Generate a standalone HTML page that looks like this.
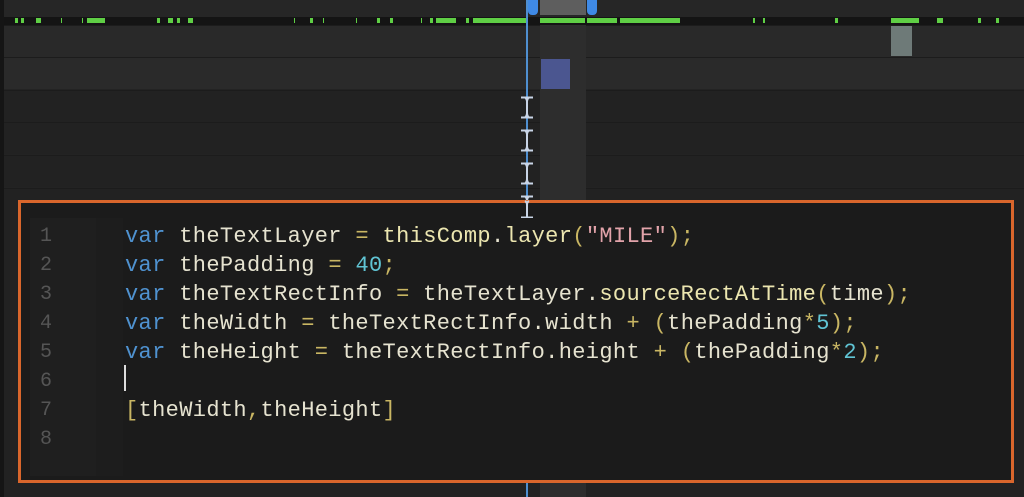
<!DOCTYPE html>
<html><head><meta charset="utf-8"><style>
*{margin:0;padding:0;box-sizing:border-box}
body{width:1024px;height:497px;overflow:hidden;background:#232323;position:relative;font-family:"Liberation Mono",monospace}
.a{position:absolute}
.row{position:absolute;left:4px;right:0;height:32px;border-top:1px solid #1c1c1c}
.g{position:absolute;top:18px;height:5px;background:#5fcf45}
.code{position:absolute;left:125px;top:222px;font-size:22px;line-height:29px;white-space:pre;color:#e6e3d0;letter-spacing:0.35px}
.ln{position:absolute;left:40px;top:222px;font-size:20px;line-height:29px;color:#555;white-space:pre}
.k{color:#4f92d0}.o{color:#c9b663}.n{color:#60c4d4}.s{color:#e2a3aa}.f{color:#ece6b0}
.ib{position:absolute;left:520px}
</style></head><body>
<div class="a" style="left:0;top:0;width:1024px;height:17px;background:#262626"></div>
<div class="a" style="left:0;top:17px;width:1024px;height:8px;background:#141414"></div>
<div class="a" style="left:0;top:0;width:4px;height:497px;background:#151515"></div>
<div class="g" style="left:15px;width:3px"></div><div class="g" style="left:21px;width:3px"></div><div class="g" style="left:36px;width:5px"></div>
<div class="g" style="left:61px;width:1px"></div><div class="g" style="left:82px;width:1px"></div><div class="g" style="left:87px;width:18px"></div>
<div class="g" style="left:157px;width:3px"></div><div class="g" style="left:168px;width:5px"></div><div class="g" style="left:177px;width:3px"></div><div class="g" style="left:188px;width:5px"></div>
<div class="g" style="left:294px;width:1px"></div><div class="g" style="left:310px;width:3px"></div><div class="g" style="left:323px;width:1px"></div>
<div class="g" style="left:356px;width:1px"></div><div class="g" style="left:377px;width:3px"></div><div class="g" style="left:390px;width:3px"></div>
<div class="g" style="left:421px;width:1px"></div><div class="g" style="left:430px;width:3px"></div><div class="g" style="left:436px;width:20px"></div>
<div class="g" style="left:466px;width:3px"></div><div class="g" style="left:473px;width:53px"></div>
<div class="g" style="left:540px;width:45px"></div><div class="g" style="left:587px;width:30px"></div><div class="g" style="left:620px;width:60px"></div>
<div class="g" style="left:753px;width:2px"></div><div class="g" style="left:763px;width:2px"></div><div class="g" style="left:835px;width:3px"></div>
<div class="g" style="left:891px;width:28px"></div><div class="g" style="left:937px;width:6px"></div><div class="g" style="left:978px;width:3px"></div><div class="g" style="left:996px;width:3px"></div>
<div class="row" style="top:25px;background:#292929"></div>
<div class="row" style="top:57px;background:#2a2a2a"></div>
<div class="row" style="top:90px;background:#222"></div>
<div class="row" style="top:122px;background:#222"></div>
<div class="row" style="top:155px;background:#222"></div>
<div class="row" style="top:188px;height:309px;background:#222"></div>
<div class="a" style="left:540px;top:25px;width:46px;height:472px;background:#2d2d2d"></div>
<div class="a" style="left:541px;top:59px;width:29px;height:30px;background:#4b5690"></div>
<div class="a" style="left:891px;top:26px;width:21px;height:30px;background:#6e7a78"></div>
<div class="a" style="left:540px;top:0;width:46px;height:15px;background:#5e5e5e"></div>
<div class="a" style="left:528px;top:0;width:10px;height:15px;background:#3f8ae6;border-radius:0 0 4px 4px"></div>
<div class="a" style="left:587px;top:0;width:10px;height:15px;background:#3f8ae6;border-radius:0 0 4px 4px"></div>
<div class="a" style="left:526px;top:0;width:2px;height:497px;background:#4f8fd0"></div>
<svg class="ib" style="top:96px" width="14" height="24"><path d="M1 1.5H13M1 21.5H13M5 1.5Q7 3 7 6V17Q7 20 5 21.5M9 1.5Q7 3 7 6M9 21.5Q7 20 7 17" stroke="#c8d4e6" stroke-width="2" fill="none"/></svg>
<svg class="ib" style="top:129px" width="14" height="24"><path d="M1 1.5H13M1 21.5H13M5 1.5Q7 3 7 6V17Q7 20 5 21.5M9 1.5Q7 3 7 6M9 21.5Q7 20 7 17" stroke="#c8d4e6" stroke-width="2" fill="none"/></svg>
<svg class="ib" style="top:162px" width="14" height="24"><path d="M1 1.5H13M1 21.5H13M5 1.5Q7 3 7 6V17Q7 20 5 21.5M9 1.5Q7 3 7 6M9 21.5Q7 20 7 17" stroke="#c8d4e6" stroke-width="2" fill="none"/></svg>
<svg class="ib" style="top:195px" width="14" height="24"><path d="M1 1.5H13M1 21.5H13M5 1.5Q7 3 7 6V17Q7 20 5 21.5M9 1.5Q7 3 7 6M9 21.5Q7 20 7 17" stroke="#c8d4e6" stroke-width="2" fill="none"/></svg>
<div class="a" style="left:18px;top:200px;width:996px;height:283px;border:3px solid #d9662c;background:#1b1b1b"></div>
<div class="a" style="left:30px;top:218px;width:66px;height:258px;background:#1f1f1f"></div>
<div class="a" style="left:96px;top:218px;width:27px;height:258px;background:#1d1d1d"></div>
<div class="a" style="left:526px;top:203px;width:2px;height:14px;background:#4f8fd0"></div>
<svg class="ib" style="top:200px" width="14" height="18"><path d="M5 1Q7 2 7 5V17M9 1Q7 2 7 5M1 17.5H13" stroke="#c8d4e6" stroke-width="2" fill="none"/></svg>
<div class="ln">1
2
3
4
5
6
7
8</div>
<div class="code"><span class="k">var</span> theTextLayer <span class="o">=</span> <span class="f">thisComp</span>.<span class="f">layer</span><span class="o">(</span><span class="s">"MILE"</span><span class="o">);</span>
<span class="k">var</span> thePadding <span class="o">=</span> <span class="n">40</span><span class="o">;</span>
<span class="k">var</span> theTextRectInfo <span class="o">=</span> theTextLayer.<span class="f">sourceRectAtTime</span><span class="o">(</span>time<span class="o">);</span>
<span class="k">var</span> theWidth <span class="o">=</span> theTextRectInfo.width <span class="o">+</span> <span class="o">(</span>thePadding<span class="o">*</span><span class="n">5</span><span class="o">);</span>
<span class="k">var</span> theHeight <span class="o">=</span> theTextRectInfo.height <span class="o">+</span> <span class="o">(</span>thePadding<span class="o">*</span><span class="n">2</span><span class="o">);</span>

<span class="o">[</span>theWidth<span class="o">,</span>theHeight<span class="o">]</span></div>
<div class="a" style="left:124px;top:365px;width:2px;height:26px;background:#ddd"></div>
</body></html>
